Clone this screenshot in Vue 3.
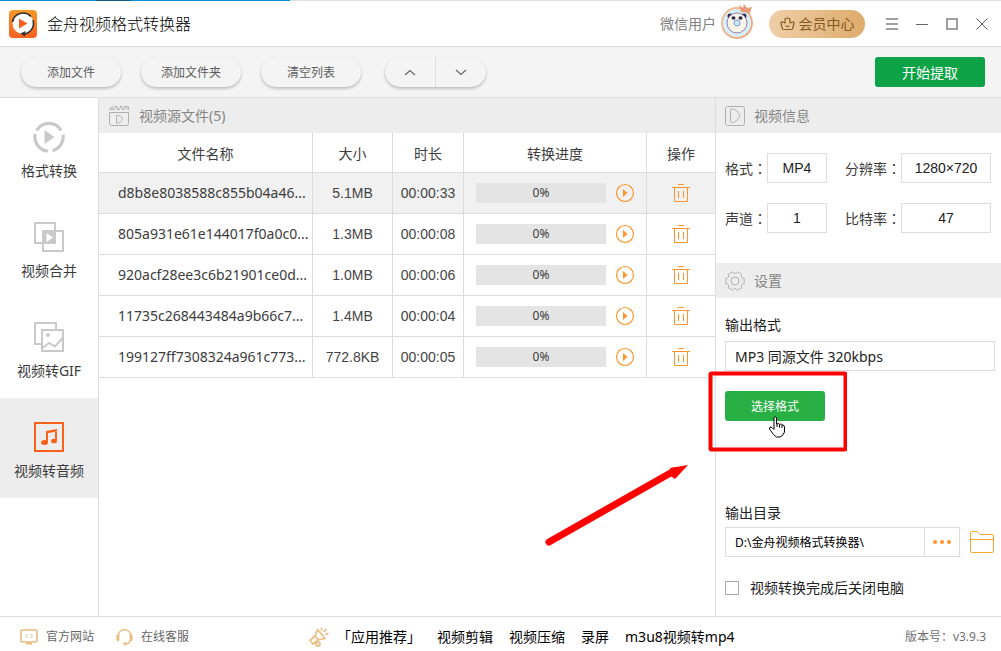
<script setup>
import { ref } from 'vue'

const tabs = [
  { id: 'convert', label: '格式转换' },
  { id: 'merge', label: '视频合并' },
  { id: 'gif', label: '视频转GIF' },
  { id: 'audio', label: '视频转音频' },
]
const activeTab = ref('audio')

const files = [
  { name: 'd8b8e8038588c855b04a46...', size: '5.1MB', time: '00:00:33', progress: 0 },
  { name: '805a931e61e144017f0a0c0...', size: '1.3MB', time: '00:00:08', progress: 0 },
  { name: '920acf28ee3c6b21901ce0d...', size: '1.0MB', time: '00:00:06', progress: 0 },
  { name: '11735c268443484a9b66c7...', size: '1.4MB', time: '00:00:04', progress: 0 },
  { name: '199127ff7308324a961c773...', size: '772.8KB', time: '00:00:05', progress: 0 },
]
const selected = ref(0)

const info = [
  { id: 'format', label: '格式', value: 'MP4' },
  { id: 'resolution', label: '分辨率', value: '1280×720' },
  { id: 'channels', label: '声道', value: '1' },
  { id: 'bitrate', label: '比特率', value: '47' },
]
const outputFormat = ref('MP3 同源文件 320kbps')
const outputDir = ref('D:\\金舟视频格式转换器\\')
const shutdown = ref(false)
const apps = ['视频剪辑', '视频压缩', '录屏', 'm3u8视频转mp4']
</script>

<template>
  <div class="app">
    <div class="strip"><span class="strip-blue"><i></i></span></div>
    <header class="titlebar">
      <svg class="logo" viewBox="0 0 28 28">
        <defs>
          <linearGradient id="logoFill" x1="0" y1="0" x2="0" y2="1">
            <stop offset="0" stop-color="#f99a24" />
            <stop offset="1" stop-color="#f8601f" />
          </linearGradient>
        </defs>
        <rect width="28" height="28" rx="4" fill="url(#logoFill)" />
        <circle cx="14" cy="13.500" r="10.500" fill="#fff" />
        <path d="M3.500 12A10.800 10.800 0 0 1 22 6.500M24 10A10.800 10.800 0 0 1 15 24" fill="none" stroke="#333" stroke-width="1.600" />
        <path d="M16.500 21l-5 2.500 4.500 3z" fill="#333" />
        <path d="M10 8.500v10l8.500-5z" fill="#f8601f" />
      </svg>
      <h1>金舟视频格式转换器</h1>
      <span class="user">微信用户</span>
      <svg class="avatar" viewBox="0 0 34 36">
        <defs>
          <linearGradient id="vipRing" x1="0" y1="0" x2="1" y2="1">
            <stop offset="0" stop-color="#f0c095" />
            <stop offset="1" stop-color="#e9a275" />
          </linearGradient>
        </defs>
        <circle cx="16" cy="19" r="15" fill="#d8eefa" stroke="url(#vipRing)" stroke-width="1.800" />
        <circle cx="9" cy="12" r="2.500" fill="#2e2a49" />
        <circle cx="23" cy="12" r="2.500" fill="#2e2a49" />
        <circle cx="16" cy="19" r="10" fill="#fbf4ea" stroke="#8d84ae" />
        <ellipse cx="12.500" cy="14" rx="2" ry="1.800" fill="#2e2a49" />
        <ellipse cx="19.500" cy="14" rx="2" ry="1.800" fill="#2e2a49" />
        <circle cx="16" cy="19" r="3" fill="#cfe9f8" stroke="#7a9ccc" />
        <path d="M18 1l4 3 1-4 3 4 5-1-2 6-9-1z" fill="#e99a78" />
      </svg>
      <button class="vip" type="button">
        <svg width="15" height="14" viewBox="0 0 15 14" fill="none" stroke="#8a5a1c" stroke-width="1.200" stroke-linejoin="round">
          <path d="M3.500 12.500q-1 0-1.200-1L1 6q0-1.500 1.500-1L5 6V3q0-2 2.500-2T10 3.500V6l2.500-1q1.500-.5 1.500 1l-1.300 5.500q-.2 1-1.200 1zM5.500 8.500c1 1.500 3 1.500 4 0" />
        </svg>
        会员中心
      </button>
      <div class="window-buttons">
        <button type="button" aria-label="菜单">
          <svg width="14" height="14" viewBox="0 0 14 14" stroke="#a0a0a0" stroke-width="2"><path d="M1 2h12M1 7h12M1 12h12" /></svg>
        </button>
        <button type="button" aria-label="最小化">
          <svg width="14" height="14" viewBox="0 0 14 14" stroke="#666"><path d="M1 7.500h12" /></svg>
        </button>
        <button type="button" aria-label="最大化">
          <svg width="14" height="14" viewBox="0 0 14 14" fill="none" stroke="#a0a0a0" stroke-width="2"><path d="M2 2h10v10H2z" /></svg>
        </button>
        <button type="button" aria-label="关闭">
          <svg width="14" height="14" viewBox="0 0 14 14" stroke="#555"><path d="M1.500 1.500l11 11M12.500 1.500l-11 11" /></svg>
        </button>
      </div>
    </header>

    <div class="toolbar">
      <button class="pill" type="button">添加文件</button>
      <button class="pill" type="button">添加文件夹</button>
      <button class="pill" type="button">清空列表</button>
      <div class="order">
        <button type="button" aria-label="上移">
          <svg width="12" height="7" viewBox="0 0 12 7" fill="none" stroke="#666" stroke-width="1.200"><path d="M1 6l5-4.500L11 6" /></svg>
        </button>
        <button type="button" aria-label="下移">
          <svg width="12" height="7" viewBox="0 0 12 7" fill="none" stroke="#666" stroke-width="1.200"><path d="M1 1l5 4.500L11 1" /></svg>
        </button>
      </div>
      <button class="start" type="button">开始提取</button>
    </div>

    <main class="body">
      <nav class="tabs">
        <button
          v-for="tab in tabs"
          :key="tab.id"
          type="button"
          :class="{ active: tab.id === activeTab }"
          @click="activeTab = tab.id"
        >
          <svg v-if="tab.id === 'convert'" width="32" height="32" viewBox="0 0 32 32" fill="none" stroke="#c9c9c9" stroke-width="3.200">
            <path d="M3.700 9.500A14 14 0 0 1 28 9.500M30 13.500A14 14 0 0 1 19.500 29.500M15 30A14 14 0 0 1 2.200 13" />
            <path d="M11.500 9v14l10-7z" fill="#c9c9c9" stroke="none" />
          </svg>
          <svg v-else-if="tab.id === 'merge'" width="32" height="32" viewBox="0 0 32 32" fill="none" stroke="#c9c9c9" stroke-width="2">
            <path d="M2 2h20v20H2zM10 10h20v20H10z" />
            <path d="M10 10h12v12H10z" fill="#c9c9c9" />
            <path d="M13.500 12v9l6.500-4.500z" fill="#fff" stroke="none" />
          </svg>
          <svg v-else-if="tab.id === 'gif'" width="32" height="32" viewBox="0 0 32 32" fill="none" stroke="#c9c9c9" stroke-width="2">
            <path d="M9 23H2V2h21v7M9 9h21v21H9z" />
            <path d="M9 27.500l7-5.500 6 3.500 8-9" />
            <circle cx="15" cy="14" r="2" fill="#c9c9c9" stroke="none" />
          </svg>
          <svg v-else width="32" height="32" viewBox="0 0 32 32" fill="none" stroke="#fa621b" stroke-width="2">
            <path d="M2 2h28v28H2zM14 21V11M23 19v-8" />
            <path d="M13 10l11-2v2.500l-11 2z" fill="#fa621b" stroke="none" />
            <ellipse cx="11.500" cy="21.500" rx="3.500" ry="2.500" fill="#fa621b" stroke="none" />
            <ellipse cx="21" cy="20" rx="3" ry="2.300" fill="#fa621b" stroke="none" />
          </svg>
          <span>{{ tab.label }}</span>
        </button>
      </nav>

      <section class="files">
        <h2 class="bar">
          <svg width="22" height="22" viewBox="0 0 22 22" fill="none" stroke="#b0b0b0">
            <path d="M1.500 7.500h19v11a2 2 0 0 1-2 2h-15a2 2 0 0 1-2-2zM8.500 10.500h2c5 1 5 6 0 7.500h-2z" />
            <path d="M1.500 4.500l3-3 2 3zM7 1.500l2.500 3h2l-2.500-3zM12 1.500l2.500 3h2L14 1.500zM16.500 1.500l4 3V2z" />
          </svg>
          视频源文件(5)
        </h2>
        <table>
          <colgroup>
            <col /><col class="c-size" /><col class="c-time" /><col class="c-progress" /><col class="c-action" />
          </colgroup>
          <thead>
            <tr><th>文件名称</th><th>大小</th><th>时长</th><th>转换进度</th><th>操作</th></tr>
          </thead>
          <tbody>
            <tr v-for="(file, i) in files" :key="file.name" :class="{ selected: i === selected }" @click="selected = i">
              <td class="name">{{ file.name }}</td>
              <td class="num">{{ file.size }}</td>
              <td class="num">{{ file.time }}</td>
              <td>
                <div class="progress">
                  <div class="track">
                    <div class="fill" :style="{ width: file.progress + '%' }"></div>
                    <span>{{ file.progress }}%</span>
                  </div>
                  <button type="button" aria-label="开始转换">
                    <svg width="20" height="20" viewBox="0 0 20 20">
                      <circle cx="10" cy="10" r="8.500" fill="none" stroke="#fc962b" stroke-width="1.200" />
                      <path d="M8 6v8l4.500-4z" fill="#fc962b" />
                    </svg>
                  </button>
                </div>
              </td>
              <td>
                <button type="button" aria-label="删除">
                  <svg width="18" height="20" viewBox="0 0 18 20" fill="none" stroke="#fc962b">
                    <path d="M6 1.500h6M0 4.500h18M2.500 4.500v14h13v-14M6.500 8v7M11.500 8v7" />
                  </svg>
                </button>
              </td>
            </tr>
          </tbody>
        </table>
      </section>

      <aside class="panel">
        <h2 class="bar">
          <svg width="20" height="20" viewBox="0 0 20 20" fill="none" stroke="#b0b0b0">
            <rect x="0.500" y="0.500" width="19" height="19" rx="2" />
            <path d="M5.500 4q0-1 1-1h1c3 0 7 4 7 6.500s-4 7-7 7h-1q-1 0-1-1z" />
          </svg>
          视频信息
        </h2>
        <div class="info">
          <template v-for="item in info" :key="item.id">
            <label :for="item.id">{{ item.label }}<span class="colon">：</span></label>
            <input :id="item.id" :value="item.value" readonly />
          </template>
        </div>
        <h2 class="bar">
          <svg width="20" height="20" viewBox="0 0 20 20" fill="none" stroke="#b0b0b0" stroke-linejoin="round">
            <path d="M19.200 7.500V12.500Q15.200 13 16.700 16.700L12.500 19.200Q10 16 7.500 19.200L3.300 16.700Q4.800 13 .8 12.500V7.500Q4.800 7 3.300 3.300L7.500 .8Q10 4 12.500 .8L16.700 3.300Q15.200 7 19.200 7.500Z" />
            <circle cx="10" cy="10" r="4" />
          </svg>
          设置
        </h2>
        <div class="settings">
          <label class="caption" for="out-format">输出格式</label>
          <input id="out-format" v-model="outputFormat" class="format-box" />
          <div class="choose">
            <button type="button">选择格式</button>
            <svg class="annotation" width="304" height="176" viewBox="0 0 304 176">
              <rect x="167.500" y="3.500" width="135" height="76" rx="1" fill="none" stroke="#fe0000" stroke-width="4" />
              <path d="M6 172L131 101" stroke="#fe0000" stroke-width="7" stroke-linecap="round" />
              <path d="M145 95l-18 3 1 3-2 4 6 4z" fill="#fe0000" />
              <g transform="translate(225 46)">
                <path d="M6 1.500q1-1.500 2.500 0V8l2-.5 1 .8 2-.3 1 1 1.500.5.500 1.500v5l-2 3.500-2.500 1.500H8.500L5.500 18.500 1.500 13l.5-2 2 .5 2 2z" fill="#fff" stroke="#000" />
                <path d="M9 8v3M11.500 8.500v3M14 9v3" stroke="#000" />
              </g>
            </svg>
          </div>
          <label class="caption directory-caption" for="out-dir">输出目录</label>
          <div class="directory">
            <input id="out-dir" v-model="outputDir" />
            <button class="browse" type="button" aria-label="浏览">
              <svg width="18" height="4" viewBox="0 0 18 4" fill="#fc962b"><circle cx="2" cy="2" r="2" /><circle cx="9" cy="2" r="2" /><circle cx="16" cy="2" r="2" /></svg>
            </button>
            <button class="open" type="button" aria-label="打开目录">
              <svg width="24" height="22" viewBox="0 0 24 22" fill="none" stroke="#fca52f"><path d="M.5 2q0-1.500 1.500-1.500h5L10 3.500h12q1.500 0 1.500 1.500v15q0 1.500-1.500 1.500H2Q.5 21.500.5 20zM.5 8.500h23" /></svg>
            </button>
          </div>
          <label class="check"><input v-model="shutdown" type="checkbox" />视频转换完成后关闭电脑</label>
        </div>
      </aside>
    </main>

    <footer class="footer">
      <a class="small" href="#">
        <svg width="18" height="16" viewBox="0 0 18 16" fill="none" stroke="#ebbc7f" stroke-width="1.600"><rect x="1" y="1" width="16" height="12" rx="1" /><path d="M7.500 5l-2 2 2 2M10.500 5l2 2-2 2" stroke-width="1" /><path d="M6 14.500h6" stroke-width="2" /></svg>
        官方网站
      </a>
      <a class="small service" href="#">
        <svg width="17" height="18" viewBox="0 0 18 18" fill="none" stroke="#ebbc7f" stroke-width="1.600"><path d="M2.500 8C2.500-1 15.500-1 15.500 8M15 12q0 4-5 4.500" /><path d="M2 7.500v4.500M16 7.500v4.500" stroke-width="3" stroke-linecap="round" /><circle cx="9.500" cy="16" r="1.800" fill="#ebbc7f" stroke="none" /></svg>
        在线客服
      </a>
      <div class="recommend">
        <svg width="20" height="20" viewBox="0 0 20 20" fill="none" stroke="#ebbc7f" stroke-width="1.700" stroke-linejoin="round"><path d="M8.500 2.500L16 11.500 9 13 4 17 1 13.500 6 9zM6 9l3.500 4M12.500 3.500V.5M14.500 5L17.500 2M16 7.500l3.500-1" /><circle cx="9" cy="17" r="2" /></svg>
        <span class="heading">「应用推荐」</span>
        <a v-for="app in apps" :key="app" href="#">{{ app }}</a>
      </div>
      <span class="version">版本号：v3.9.3</span>
    </footer>
  </div>
</template>

<style>
body {
  margin: 0;
}
</style>

<style scoped>
* {
  box-sizing: border-box;
}
.app {
  display: flex;
  flex-direction: column;
  min-height: 100vh;
  overflow: hidden;
  background: #fff;
  color: #3c3c3c;
  font: 400 14px/20px "Noto Sans", "Noto Sans CJK SC", sans-serif;
}
button, input {
  margin: 0;
  padding: 0;
  font: inherit;
  color: inherit;
}
button {
  border: 0;
  background: none;
  cursor: pointer;
}
svg {
  display: block;
  flex: none;
}
a {
  color: inherit;
  text-decoration: none;
}
h1, h2 {
  margin: 0;
  font-weight: 400;
}
.strip {
  height: 1px;
  background: #ddd;
}
.strip-blue {
  display: block;
  width: 29%;
  height: 1px;
  padding-left: 96px;
  background: #0a8fd8;
}
.strip-blue i {
  display: block;
  width: 35px;
  height: 1px;
  background: #155b85;
}
.titlebar {
  display: flex;
  align-items: center;
  height: 46px;
  padding: 0 12px 0 9px;
  border-bottom: 1px solid #dcdcdc;
}
.logo {
  width: 28px;
  height: 28px;
}
h1 {
  margin-left: 10px;
  font-size: 16px;
  font-weight: 300;
  line-height: 24px;
  color: #000;
}
.user {
  margin-left: auto;
  color: #808080;
}
.avatar {
  width: 34px;
  height: 36px;
  margin: 0 14px 4px 5px;
}
.vip {
  display: flex;
  align-items: center;
  justify-content: center;
  gap: 4px;
  width: 96px;
  height: 28px;
  border-radius: 14px;
  background: linear-gradient(90deg, #efcfa8, #deab6b);
  color: #85591f;
}
.window-buttons {
  display: flex;
  gap: 16px;
  margin-left: 20px;
}
.toolbar {
  display: flex;
  align-items: center;
  gap: 20px;
  height: 51px;
  padding: 0 16px 0 21px;
  border-bottom: 1px solid #dcdcdc;
  background: #f4f4f4;
}
.pill {
  width: 100px;
  height: 30px;
  padding-top: 2px;
  border-radius: 15px;
  box-shadow: 0 2px 3px #0003, 0 0 1px #0002;
  font-size: 12px;
  color: #5c5c5c;
}
.order {
  display: flex;
  height: 30px;
  margin-left: 4px;
  border-radius: 15px;
  box-shadow: 0 2px 3px #0003, 0 0 1px #0002;
}
.order button {
  display: grid;
  place-items: center;
  width: 50px;
}
.order button + button {
  width: 51px;
  border-left: 1px solid #dcdcdc;
}
.start {
  width: 110px;
  height: 30px;
  margin-left: auto;
  padding-top: 2px;
  border-radius: 3px;
  background: #0ba345;
  color: #fff;
}
.body {
  display: flex;
  flex: 1;
}
.tabs {
  flex: none;
  width: 99px;
  border-right: 1px solid #dcdcdc;
}
.tabs button {
  display: flex;
  flex-direction: column;
  align-items: center;
  gap: 8px;
  width: 100%;
  height: 100px;
  padding-top: 23px;
}
.tabs .active {
  background: #ededed;
}
.files {
  flex: 1;
  min-width: 0;
}
.bar {
  display: flex;
  align-items: center;
  gap: 9px;
  height: 35px;
  padding-left: 9px;
  background: #ededed;
  font-size: 14px;
  color: #858585;
}
table {
  width: 100%;
  table-layout: fixed;
  border-collapse: separate;
  border-spacing: 0;
}
.c-size {
  width: 80px;
}
.c-time {
  width: 71px;
}
.c-progress {
  width: 183px;
}
.c-action {
  width: 68px;
}
th, td {
  padding: 0;
  border-right: 1px solid #dcdcdc;
  border-bottom: 1px solid #dcdcdc;
  text-align: center;
  white-space: nowrap;
}
th:last-child, td:last-child {
  border-right: 0;
}
th {
  height: 40px;
  padding-top: 2px;
  font-weight: 400;
}
td {
  height: 41px;
}
.selected {
  background: #f1f1f1;
}
.name {
  padding-left: 19px;
  text-align: left;
  overflow: hidden;
}
.num {
  font-family: "Liberation Sans", Arial, sans-serif;
  color: #444;
}
td > button {
  display: block;
  margin: 0 auto;
}
.progress {
  display: flex;
  align-items: center;
  gap: 9px;
  padding: 0 11px 0 12px;
}
.progress button {
  flex: none;
}
.track {
  display: grid;
  flex: 1;
  height: 20px;
  background: #e4e4e4;
  font-size: 12px;
}
.track > * {
  grid-area: 1 / 1;
}
.fill {
  background: #0ba345;
}
.panel {
  display: flex;
  flex: none;
  flex-direction: column;
  width: 286px;
  border-left: 1px solid #dcdcdc;
}
.info {
  display: grid;
  grid-template-columns: 42px 60px 74px 1fr;
  row-gap: 20px;
  padding: 20px 10px 30px 9px;
}
.info label {
  align-self: center;
  white-space: nowrap;
}
.info label:nth-of-type(even) {
  justify-self: end;
}
.colon {
  font-family: "Noto Sans CJK JP", sans-serif;
}
.panel input:not([type="checkbox"]) {
  width: 100%;
  min-width: 0;
  height: 30px;
  border: 1px solid #dcdcdc;
  border-radius: 0;
  outline: 0;
  background: #fff;
  color: #222;
}
.panel .info input:not([type="checkbox"]) {
  font-family: "Liberation Sans", Arial, sans-serif;
  text-align: center;
}
.settings {
  display: flex;
  flex: 1;
  flex-direction: column;
  padding: 17px 6px 18px 9px;
}
.caption {
  margin-bottom: 6px;
  color: #222;
}
.panel .format-box:not([type="checkbox"]) {
  padding: 0 9px;
}
.choose {
  position: relative;
  margin-top: 20px;
}
.choose button {
  display: block;
  width: 100px;
  height: 30px;
  padding-top: 2px;
  border-radius: 3px;
  background: #28b045;
  color: #fff;
  font-size: 12px;
}
.annotation {
  position: absolute;
  top: -21px;
  left: -182px;
  pointer-events: none;
}
.directory-caption {
  margin-top: auto;
  margin-bottom: 4px;
}
.directory {
  display: flex;
  align-items: center;
}
.panel .directory input:not([type="checkbox"]) {
  flex: 1;
  padding: 0 9px;
  font-size: 12px;
  color: #000;
}
.browse {
  display: grid;
  place-items: center;
  width: 35px;
  height: 30px;
  border: 1px solid #dcdcdc;
  border-left: 0;
}
.open {
  margin: 0 1px 0 10px;
}
.check {
  display: flex;
  align-items: center;
  gap: 11px;
  margin-top: 21px;
  color: #222;
}
.check input {
  appearance: none;
  width: 14px;
  height: 14px;
  border: 1px solid #aaa;
  background: #fff;
}
.check input:checked {
  background: #0ba345;
}
.footer {
  display: flex;
  align-items: center;
  height: 35px;
  padding: 6px 15px 0 20px;
  border-top: 1px solid #dcdcdc;
}
.small {
  display: flex;
  align-items: center;
  gap: 8px;
  font-size: 12px;
  color: #666;
}
.service {
  margin-left: 22px;
}
.recommend {
  display: flex;
  align-items: center;
  gap: 16px;
  margin: 0 auto 0 120px;
  color: #000;
}
.heading {
  margin-left: -8px;
}
.version {
  font-size: 12px;
  color: #707070;
}
</style>
